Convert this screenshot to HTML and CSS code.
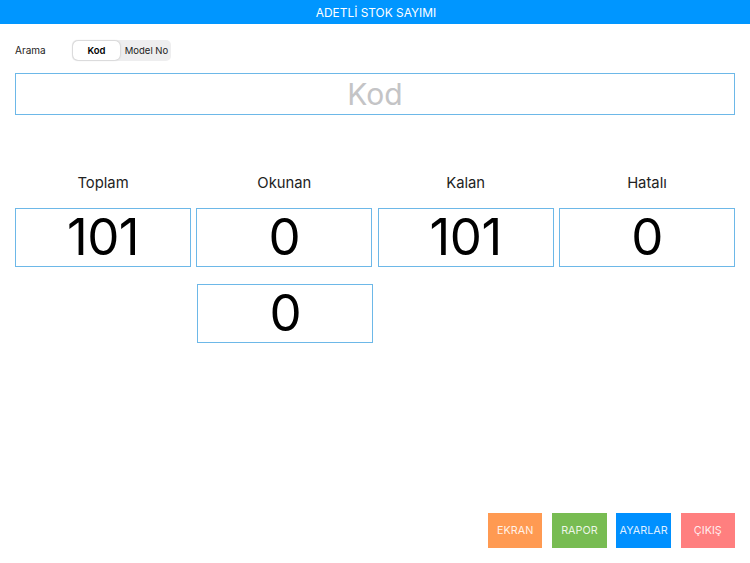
FILE: index.html
```html
<!DOCTYPE html>
<html lang="tr">
<head>
<meta charset="utf-8">
<title>Adetli Stok Sayımı</title>
<link rel="stylesheet" href="styles.css">
</head>
<body>
<div class="page">
  <header class="topbar">ADETLİ STOK SAYIMI</header>
  <section class="search-row">
    <span class="search-label">Arama</span>
    <div class="segmented">
      <span class="seg seg-active">Kod</span>
      <span class="seg">Model No</span>
    </div>
  </section>
  <div class="code-field">Kod</div>
  <section class="stats">
    <div class="stat-label">Toplam</div>
    <div class="stat-label">Okunan</div>
    <div class="stat-label">Kalan</div>
    <div class="stat-label">Hatalı</div>
    <div class="stat-box">101</div>
    <div class="stat-box">0</div>
    <div class="stat-box">101</div>
    <div class="stat-box">0</div>
    <div class="stat-box stat-extra">0</div>
  </section>
  <footer class="actions">
    <button class="action ekran">EKRAN</button>
    <button class="action rapor">RAPOR</button>
    <button class="action ayarlar">AYARLAR</button>
    <button class="action cikis">ÇIKIŞ</button>
  </footer>
</div>
</body>
</html>
```
FILE: styles.css
```css
* { box-sizing: border-box; }
html, body { margin: 0; padding: 0; background: #fff; }
body { font-family: Inter, "Liberation Sans", sans-serif; color: #000; }
.page { width: 750px; height: 563px; display: flex; flex-direction: column; overflow: hidden; }
.topbar {
  height: 24px; background: #0096ff; color: #fff;
  display: flex; align-items: center; justify-content: center;
  font-size: 11.9px; padding-left: 2px;
}
.search-row { display: flex; align-items: center; margin: 16px 15px 0; height: 21px; }
.search-label { width: 57px; font-size: 10px; color: #222; line-height: 20px; margin-bottom: 1px; }
.segmented {
  width: 99px; height: 21px; background: #eeeeef; border-radius: 5px;
  display: flex; align-items: center; font-size: 9.5px; padding-left: 1px;
}
.seg { flex: 1; text-align: center; color: #222; white-space: nowrap; line-height: 20px; }
.seg-active {
  flex: 0 0 47px; height: 19px; line-height: 19px; background: #fff; border-radius: 5px;
  font-weight: 600; color: #000; box-shadow: 0 0 2px rgba(0,0,0,.3);
  margin-right: 2px;
}
.code-field {
  margin: 12px 15px 0; height: 42px; border: 1px solid #6db8e8;
  display: flex; align-items: center; justify-content: center;
  font-size: 30px; color: #c4c4c6;
}
.stats {
  margin: 57px 15px 0; display: grid;
  grid-template-columns: repeat(4, 176px); column-gap: 5.33px;
  row-gap: 15px;
}
.stat-label { text-align: center; font-size: 14.8px; line-height: 20px; color: #222; margin-top: 1px; }
.stat-box {
  height: 59px; border: 1px solid #6db8e8;
  display: flex; align-items: center; justify-content: center;
  font-size: 51px; font-weight: 400; letter-spacing: -0.5px; color: #000; padding-bottom: 2px;
}
.stat-extra { grid-column: 2; margin: 1.5px -1px 0 1px; }
.actions { margin: auto 15px 15px 0; display: flex; justify-content: flex-end; gap: 9.8px; }
.action {
  width: 54.4px; height: 35px; border: 0; padding: 0; color: rgba(255, 255, 255, .88);
  font-family: inherit; font-size: 10.8px; white-space: nowrap;
  display: flex; align-items: center; justify-content: center;
}
.ekran { background: #ff9a52; }
.rapor { background: #78bc52; }
.ayarlar { background: #0090ff; }
.cikis { background: #ff7f7f; }
```
